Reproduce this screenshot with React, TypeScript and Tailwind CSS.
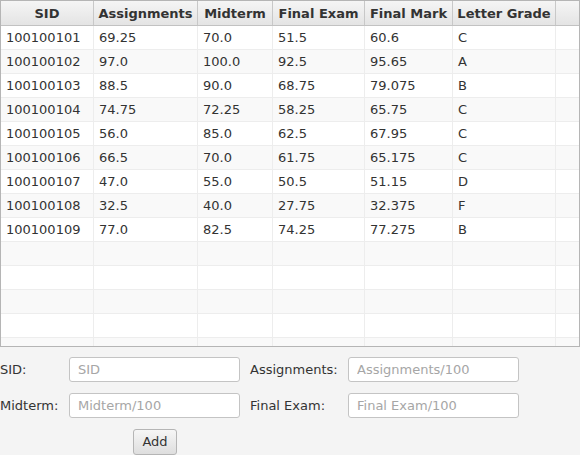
import * as React from 'react';

type Row = { sid: string; asg: string; mid: string; fin: string; mark: string; grade: string };

const rows: Row[] = [
  { sid: '100100101', asg: '69.25', mid: '70.0', fin: '51.5', mark: '60.6', grade: 'C' },
  { sid: '100100102', asg: '97.0', mid: '100.0', fin: '92.5', mark: '95.65', grade: 'A' },
  { sid: '100100103', asg: '88.5', mid: '90.0', fin: '68.75', mark: '79.075', grade: 'B' },
  { sid: '100100104', asg: '74.75', mid: '72.25', fin: '58.25', mark: '65.75', grade: 'C' },
  { sid: '100100105', asg: '56.0', mid: '85.0', fin: '62.5', mark: '67.95', grade: 'C' },
  { sid: '100100106', asg: '66.5', mid: '70.0', fin: '61.75', mark: '65.175', grade: 'C' },
  { sid: '100100107', asg: '47.0', mid: '55.0', fin: '50.5', mark: '51.15', grade: 'D' },
  { sid: '100100108', asg: '32.5', mid: '40.0', fin: '27.75', mark: '32.375', grade: 'F' },
  { sid: '100100109', asg: '77.0', mid: '82.5', fin: '74.25', mark: '77.275', grade: 'B' },
];

const widths = ['w-[93px]', 'w-[104px]', 'w-[75px]', 'w-[92px]', 'w-[88px]', 'w-[103px]'];
const headers = ['SID', 'Assignments', 'Midterm', 'Final Exam', 'Final Mark', 'Letter Grade'];

function Field({ placeholder }: { placeholder: string }) {
  return (
    <input
      placeholder={placeholder}
      className="h-[25px] w-[171px] rounded-[3px] border border-[#c4c4c4] bg-white px-[8px] text-[13px] text-[#333] outline-none placeholder:text-[#a6a6a6]"
    />
  );
}

export default function App() {
  const filled = [...rows.map((r) => [r.sid, r.asg, r.mid, r.fin, r.mark, r.grade])];
  while (filled.length < 14) filled.push(['', '', '', '', '', '']);

  return (
    <div
      className="h-[455px] w-[580px] overflow-hidden bg-[#f4f4f4] text-[13px] text-[#333]"
      style={{ fontFamily: '"DejaVu Sans", sans-serif' }}
    >
      {/* Table */}
      <div className="h-[347px] overflow-hidden border border-[#b5b5b5] bg-white">
        <div className="flex h-[25px] border-b border-[#c2c2c2] bg-gradient-to-b from-[#f5f5f5] to-[#e4e4e4] font-bold">
          {headers.map((h, i) => (
            <div key={h} className={`${widths[i]} flex shrink-0 items-center justify-center border-r border-[#c8c8c8] pt-[2px]`}>
              {h}
            </div>
          ))}
          <div className="flex-1" />
        </div>
        {filled.map((cells, ri) => (
          <div key={ri} className={`flex h-[24px] border-b border-[#ededed] ${ri % 2 === 1 ? 'bg-[#f9f9f9]' : 'bg-white'}`}>
            {cells.map((c, ci) => (
              <div key={ci} className={`${widths[ci]} flex shrink-0 items-center border-r border-[#ededed] pl-[5px]`}>
                {c}
              </div>
            ))}
            <div className="flex-1" />
          </div>
        ))}
      </div>

      {/* Form */}
      <div className="flex flex-col gap-[11px] pt-[10px]">
        <div className="flex items-center">
          <span className="w-[69px]">SID:</span>
          <Field placeholder="SID" />
          <span className="ml-[10px] w-[98px]">Assignments:</span>
          <Field placeholder="Assignments/100" />
        </div>
        <div className="flex items-center">
          <span className="w-[69px]">Midterm:</span>
          <Field placeholder="Midterm/100" />
          <span className="ml-[10px] w-[98px]">Final Exam:</span>
          <Field placeholder="Final Exam/100" />
        </div>
        <div className="pl-[133px]">
          <button className="h-[26px] w-[44px] rounded-[3px] border border-[#b5b5b5] bg-gradient-to-b from-[#f6f6f6] to-[#dedede] text-[13px] text-[#333]">
            Add
          </button>
        </div>
      </div>
    </div>
  );
}
